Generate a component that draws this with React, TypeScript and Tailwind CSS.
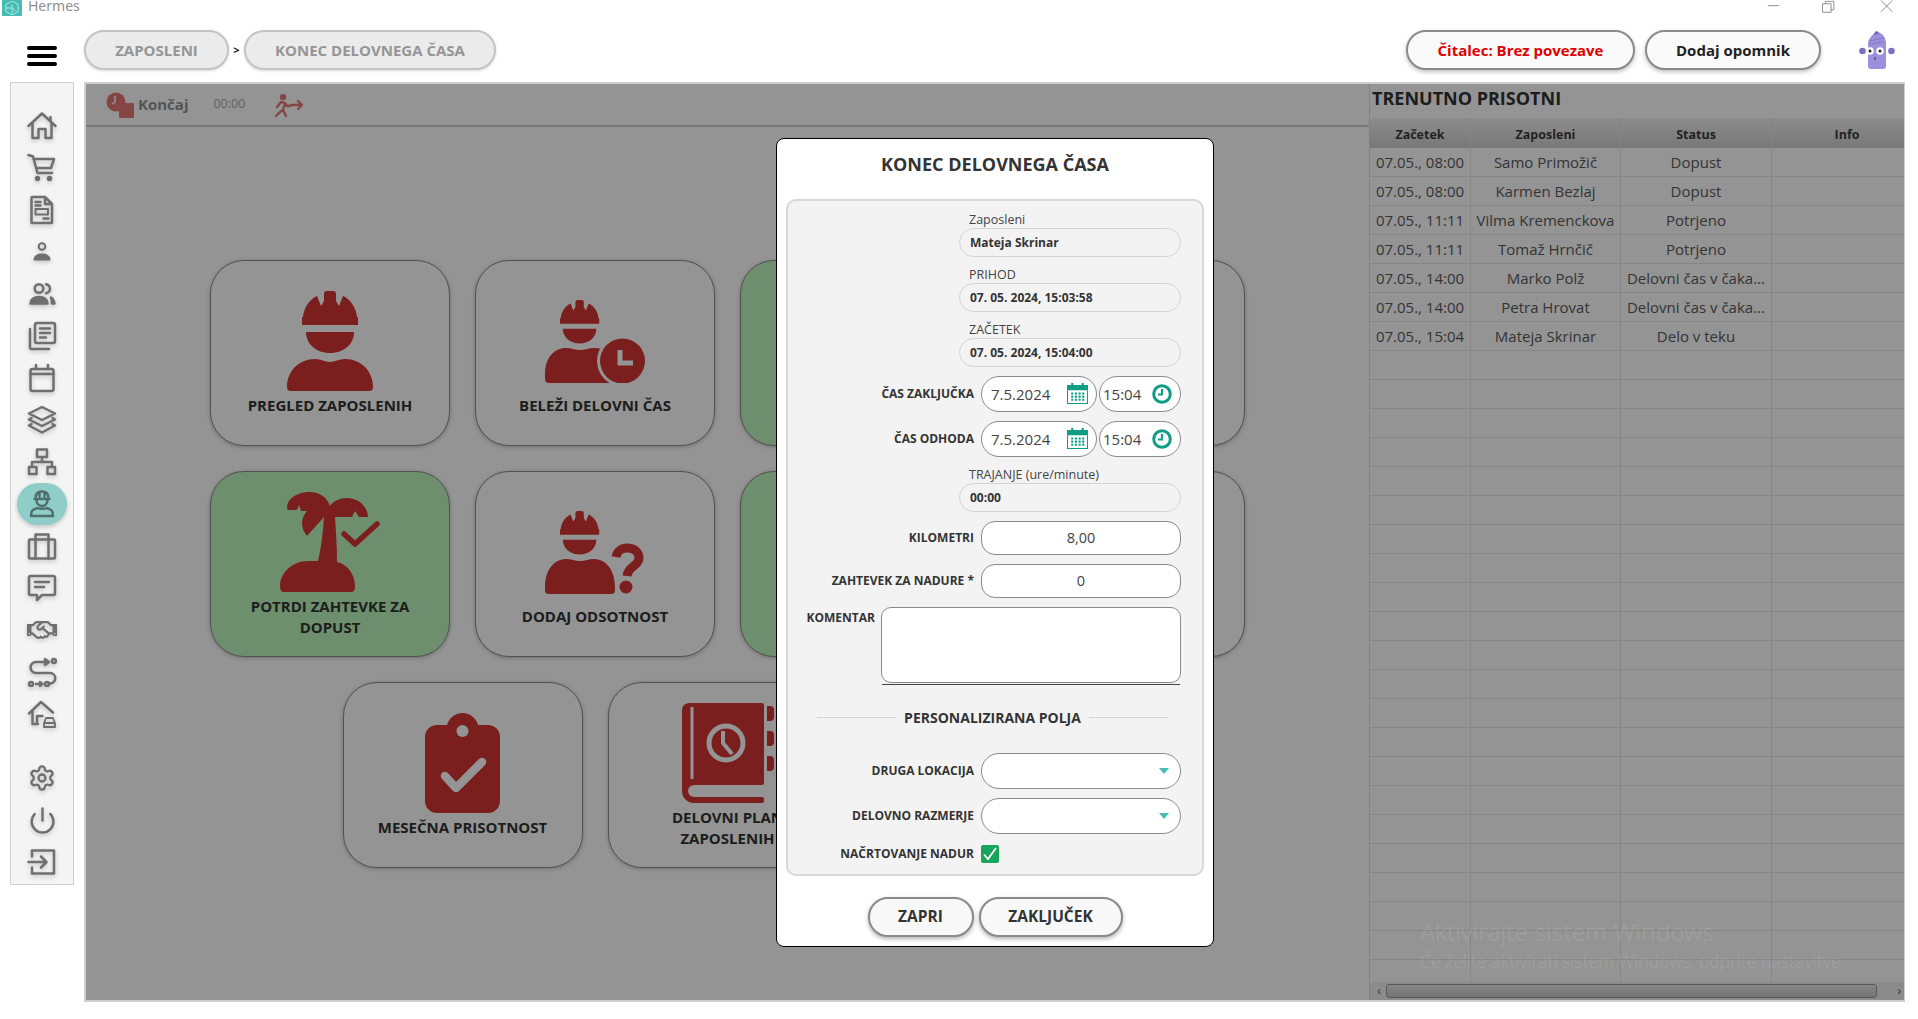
import { Settings, Power } from "lucide-react";
import { FaRegHandshake } from "react-icons/fa";
import type { ReactNode } from "react";

const RED = "#d23535";
const GREY = "#6f6f6f";

function Line({ children }: { children: ReactNode }) {
  return (
    <svg viewBox="0 0 30 30" className="h-[30px] w-[30px]" fill="none" stroke={GREY} strokeWidth="2.5" strokeLinecap="round" strokeLinejoin="round">
      {children}
    </svg>
  );
}

const navTop: ReactNode[] = [
  <Line><path d="M1.500 15 15 2.500 28.500 15M23.500 6v4M5.500 12v15h6V18h7v9h6V12" /></Line>,
  <Line><path d="M1.500 2 6 3.500 10.500 20H25M6.500 6H27l-3 9H9" /><circle cx="10.500" cy="25.500" r="1.500" fill={GREY} /><circle cx="22.500" cy="25.500" r="1.500" fill={GREY} /></Line>,
  <Line><path d="M5 2h13l7 7v18.500a.5.5 0 0 1-.5.5H5a.5.5 0 0 1-.5-.5V2.500A.5.5 0 0 1 5 2ZM18 2v7h7M8.500 7h5M8.500 10.500h5M16.500 23.500h5" /><rect x="8.500" y="14" width="12.500" height="5.500" strokeWidth="2" /></Line>,
  <Line><circle cx="15" cy="9.500" r="3.300" strokeWidth="2" /><path d="M7.500 22.500c.5-3.500 3.500-5 7.500-5s7 1.500 7.500 5Z" fill={GREY} strokeWidth="2" /></Line>,
  <Line><circle cx="12" cy="9.500" r="4.300" /><path d="M3.500 24.500c.5-5 4-6.500 8.500-6.500s8 1.500 8.500 6.500Z" fill={GREY} /><path d="M19 5.300c2.600.7 4 2.300 4 4.500s-1.400 3.800-4 4.500" /><path d="M24 18.500c2 1 3 3.200 3.500 6H25c0-2.500-.5-4.500-1-6Z" fill={GREY} /></Line>,
  <Line><rect x="8" y="2" width="20" height="20" rx="2" /><path d="M3 8v18.500A1.500 1.500 0 0 0 4.500 28H22M13 7.500h10M13 12h10M13 16.500h6" /></Line>,
  <Line><rect x="3.500" y="6" width="23" height="22" rx="2" /><path d="M3.500 11h23M9 2v4M21 2v4" /></Line>,
  <Line><path d="M15 2 28 8.500 15 15 2 8.500ZM4.500 13 2 14.500 15 21l13-6.500L25.500 13M4.500 19 2 20.500 15 27.500l13-7-2.500-1.500" /></Line>,
  <Line><rect x="10" y="2.500" width="10" height="7.500" /><path d="M15 10v5M5 20v-5h20v5" /><rect x="2" y="20" width="7.500" height="7" /><rect x="20.500" y="20" width="7.500" height="7" /></Line>,
  <Line><path d="M8.500 9.500C8.500 5 11 2.500 15 2.500s6.500 2.500 6.500 7M7.500 10h15M12.500 3.500v4M17.500 3.500v4M9.500 11c0 3.500 2.500 6 5.500 6s5.500-2.500 5.500-6M4 27c0-5 1-6.500 6.500-8 2 1 7 1 9 0 5.500 1.500 6.500 3 6.500 8Z" stroke="#4f6f6d" /></Line>,
  <Line><rect x="2" y="8.500" width="26" height="19" rx="1" /><path d="M8.500 8.500V3.500h13v5M8.500 8.500v19M21.500 8.500v19" /></Line>,
  <Line><path d="M3.500 3h23A1.500 1.500 0 0 1 28 4.500v16a1.500 1.500 0 0 1-1.500 1.500H15l-5 5v-5H3.500A1.500 1.500 0 0 1 2 20.500v-16A1.500 1.500 0 0 1 3.500 3ZM8 9h14M8 14h9" /></Line>,
  <FaRegHandshake size={30} color={GREY} />,
  <Line><path d="M21 5H9a5.500 5.500 0 0 0 0 11h14a5 5 0 0 1 0 10.500h-1" /><path d="M18 2l4 3-4 3Z" fill={GREY} /><circle cx="27" cy="4" r="2" /><circle cx="4" cy="27" r="2" /><path d="M9 27h3" /><path d="M13 25l2.500 2-2.500 2Z" fill={GREY} /><circle cx="20" cy="27" r="2" /></Line>,
  <Line><path d="M2 14.500 14 3l12 10.500M5.500 12v13h5.500M10 24v-7h5.500" /><path d="M17 28v-4l2-5h7l2 5v4ZM17 24h11" strokeWidth="1.800" /></Line>,
];

const navBottom: ReactNode[] = [
  <Settings size={28} color={GREY} strokeWidth={2} />,
  <Power size={29} color={GREY} strokeWidth={2} />,
  <Line><path d="M5 9.500V3.500h22v23H5v-6M1.500 15h18M14 9.500l5.500 5.500L14 20.500" /></Line>,
];

function HeadShape() {
  return (
    <>
      <path d="M16 26c1-10 7-18 14-21l4 10 3-5V3q0-3 3-3h6q3 0 3 3v7l3 5 4-10c7 3 13 11 14 21h1v8H15v-8Z" />
      <path d="M19 41h48c0 12-10 21-24 21S19 53 19 41Z" />
    </>
  );
}

function WorkerIcon() {
  return (
    <svg viewBox="0 0 86 100" className="h-[100px] w-[86px]" fill={RED}>
      <HeadShape />
      <path d="M0 96c0-16 12-28 28-28 6 0 10 3 15 3s9-3 15-3c16 0 28 12 28 28q0 4-4 4H4q-4 0-4-4Z" />
    </svg>
  );
}

function WorkerClockIcon() {
  return (
    <svg viewBox="0 0 100 83" className="h-[83px] w-[100px]" fill={RED}>
      <g transform="translate(4.500 0) scale(.7)"><HeadShape /></g>
      <path d="M0 74c0-16 9-26 21-26 5 0 9 2 14 2s9-2 14-2c14 0 23 10 23 26v5q0 4-4 4H4q-4 0-4-4Z" />
      <circle cx="77.500" cy="61" r="25.500" fill="#fff" />
      <circle cx="77.500" cy="61" r="22.500" />
      <path d="M75 50v13h13" fill="none" stroke="#fff" strokeWidth="5" />
    </svg>
  );
}

function WorkerQuestionIcon() {
  return (
    <svg viewBox="0 0 100 83" className="h-[83px] w-[100px]" fill={RED}>
      <g transform="translate(4.500 0) scale(.7)"><HeadShape /></g>
      <path d="M0 76c0-17 9-28 21-28 5 0 9 2 14 2s9-2 14-2c12 0 21 11 21 28v3q0 4-4 4H4q-4 0-4-4Z" />
      <path d="M71 46c1-6 6-9 11-9 7 0 12 4 12 10 0 8-11 8-12 18" fill="none" stroke={RED} strokeWidth="9" />
      <circle cx="81" cy="76" r="6.500" />
    </svg>
  );
}

function PalmIcon() {
  return (
    <svg viewBox="0 0 100 100" className="h-[100px] w-[100px]" fill={RED}>
      <path d="M7 16C7 6 18 0 30 0c9 0 17 5 20 14 3-5 10-8 17-8 11 0 20 8 21 18q0 1-1 1H79l-4-6-3 6H55c1 15 2 30 2 45 10 2 18 12 18 24q0 6-4 6H4q-4 0-4-6c0-13 12-25 28-25h10c3-13 5-28 6-44L27 44q-5-6-5-13 0-6 5-12H21l-2-6-2 5H9q-2 0-2-2Z" />
      <path d="M64 42l11 10 22-20" fill="none" stroke={RED} strokeWidth="5.500" strokeLinecap="round" strokeLinejoin="round" />
    </svg>
  );
}

function ClipboardIcon() {
  return (
    <svg viewBox="0 0 75 100" className="h-[100px] w-[75px]" fill={RED}>
      <rect y="12" width="75" height="88" rx="12" />
      <circle cx="37.500" cy="16" r="16" />
      <circle cx="37.500" cy="18" r="6" fill="#fff" />
      <path d="M20 63l11 12 26-26" fill="none" stroke="#fff" strokeWidth="8.500" strokeLinecap="round" strokeLinejoin="round" />
    </svg>
  );
}

function BookIcon() {
  return (
    <svg viewBox="0 0 92 100" className="h-[100px] w-[92px]" fill={RED}>
      <path d="M8 0h72q2 0 2 2v78q0 2-2 2H12C5 82 0 87 0 90V8q0-8 8-8Z" />
      <path d="M0 88a12 12 0 0 0 12 12h68q2 0 2-2v-2q0-2-2-2H12a6 6 0 0 1 0-12H8C3 84 0 86 0 88Z" />
      <path d="M10 4v72" stroke="#fff" strokeWidth="3" />
      <circle cx="44" cy="40" r="17" fill="none" stroke="#fff" strokeWidth="5" />
      <path d="M41 28v12l9 11" fill="none" stroke="#fff" strokeWidth="4" />
      <path d="M85 3h3q4 0 4 4v7q0 4-4 4h-3ZM85 28h3q4 0 4 4v7q0 4-4 4h-3ZM85 53h3q4 0 4 4v7q0 4-4 4h-3Z" />
    </svg>
  );
}

function Card({ icon, label, green }: { icon?: ReactNode; label?: string; green?: boolean }) {
  return (
    <div className={`flex h-[186px] w-[240px] flex-col items-center justify-center gap-[4px] rounded-[34px] border-[1.5px] border-[#8c8c8c] px-4 pt-[2px] shadow-[0_1px_4px_rgba(0,0,0,0.25)] ${green ? "bg-[#bef6be]" : "bg-white"}`}>
      {icon && <div className="flex h-[100px] items-center justify-center">{icon}</div>}
      {label && <div className="text-center text-[15px] leading-[21px] font-bold text-[#333]">{label}</div>}
    </div>
  );
}

const rows = [
  ["07.05., 08:00", "Samo Primožič", "Dopust"],
  ["07.05., 08:00", "Karmen Bezlaj", "Dopust"],
  ["07.05., 11:11", "Vilma Kremenckova", "Potrjeno"],
  ["07.05., 11:11", "Tomaž Hrnčič", "Potrjeno"],
  ["07.05., 14:00", "Marko Polž", "Delovni čas v čaka..."],
  ["07.05., 14:00", "Petra Hrovat", "Delovni čas v čaka..."],
  ["07.05., 15:04", "Mateja Skrinar", "Delo v teku"],
];

function TableRow({ cells }: { cells: string[] }) {
  return (
    <div className="flex h-[29px] shrink-0 border-b border-[#e7e7e7] text-[15px] leading-[28px] text-[#5a5a5a]">
      <div className="w-[101px] shrink-0 border-r border-[#e7e7e7] text-center">{cells[0]}</div>
      <div className="w-[150px] shrink-0 border-r border-[#e7e7e7] text-center whitespace-nowrap">{cells[1]}</div>
      <div className="w-[151px] shrink-0 border-r border-[#e7e7e7] text-center whitespace-nowrap">{cells[2]}</div>
      <div className="flex-1" />
    </div>
  );
}

function ReadOnly({ label, value }: { label: string; value: string }) {
  return (
    <div className="w-[222px]">
      <div className="h-[17px] pl-[10px] text-[12.5px] leading-[17px] text-[#444]">{label}</div>
      <div className="h-[29px] rounded-full border border-[#d4d4d4] pl-[10px] text-[12px] leading-[27px] font-bold text-[#333]">{value}</div>
    </div>
  );
}

function Row({ label, children }: { label: string; children: ReactNode }) {
  return (
    <div className="flex items-center justify-end gap-[7px]">
      <div className="text-[12px] font-bold whitespace-nowrap text-[#333]">{label}</div>
      {children}
    </div>
  );
}

function CalendarGlyph() {
  return (
    <svg viewBox="0 0 20 20" className="h-[21px] w-[21px]" fill="#0f9d85">
      <path d="M0 2h4V0h2v2h8V0h2v2h4v5H0Z" />
      <path d="M0 7h1v12h18V7h1v13H0Z" />
      <path d="M4 9h2v2H4ZM7.500 9h2v2h-2ZM11 9h2v2h-2ZM14.500 9h2v2h-2ZM4 12h2v2H4ZM7.500 12h2v2h-2ZM11 12h2v2h-2ZM14.500 12h2v2h-2ZM4 15h2v2H4ZM7.500 15h2v2h-2ZM11 15h2v2h-2ZM14.500 15h2v2h-2Z" />
    </svg>
  );
}

function ClockGlyph() {
  return (
    <svg viewBox="0 0 20 20" className="h-[20px] w-[20px]" fill="none" stroke="#0f9d85">
      <circle cx="10" cy="10" r="8.300" strokeWidth="3" />
      <path d="M10 5v5.500H6" strokeWidth="2" />
    </svg>
  );
}

function DateTime() {
  return (
    <div className="flex gap-[2px]">
      <div className="flex h-[36px] w-[116px] items-center justify-between rounded-full border border-[#8a8a8a] bg-white pr-[8px] pl-[9px] text-[15px] leading-[36px] text-[#444]">
        <span className="pt-[1px]">7.5.2024</span>
        <CalendarGlyph />
      </div>
      <div className="flex h-[36px] w-[82px] items-center justify-between rounded-full border border-[#8a8a8a] bg-white pr-[8px] pl-[3px] text-[15px] leading-[36px] text-[#444]">
        <span className="pt-[1px]">15:04</span>
        <ClockGlyph />
      </div>
    </div>
  );
}

function NumberField({ value }: { value: string }) {
  return (
    <div className="h-[34px] w-[200px] rounded-[14px] border border-[#8a8a8a] bg-white text-center text-[14.5px] leading-[32px] text-[#444]">{value}</div>
  );
}

function SelectField() {
  return (
    <div className="flex h-[36px] w-[200px] items-center justify-end rounded-full border border-[#8a8a8a] bg-white pr-[11px]">
      <div className="h-0 w-0 border-x-[5px] border-t-[6px] border-x-transparent border-t-[#45bdb5]" />
    </div>
  );
}

function Mascot() {
  return (
    <svg viewBox="0 0 38 40" className="h-[40px] w-[38px]">
      <path d="M9 14c0-4 3-8 6-10l3-3 3 2c4 2 6 6 6 11v22q0 3-3 3H12q-3 0-3-3Z" fill="#9c90dc" />
      <path d="M14 5l3-4 3 2.500" fill="#6e60b5" />
      <path d="M10 11l15-3M11 14l13-2" stroke="#7d70c4" strokeWidth=".8" />
      <circle cx="3.500" cy="21" r="3.300" fill="#7d70c4" />
      <circle cx="32.500" cy="21" r="3.300" fill="#7d70c4" />
      <circle cx="11" cy="21" r="3.800" fill="#fff" />
      <circle cx="21" cy="21" r="3.800" fill="#fff" />
      <circle cx="11" cy="21" r="1.500" fill="#222" />
      <circle cx="21" cy="21" r="1.500" fill="#222" />
      <path d="M16 27v3" stroke="#333" strokeWidth="1" />
    </svg>
  );
}

export default function App() {
  return (
    <div className="relative flex h-screen w-screen flex-col overflow-hidden bg-white font-['Open_Sans',sans-serif]">
      {/* title bar, cut off at the top like in the capture */}
      <div className="relative flex h-[16px] shrink-0 items-start overflow-hidden pl-[2px]">
        <div className="flex h-[16px] w-[20px] items-center justify-center bg-[#45bdb5]">
          <svg viewBox="0 0 16 16" className="h-[14px] w-[14px]" fill="none" stroke="#bfeae6" strokeWidth="1">
            <path d="M8 0 15 4v8l-7 4-7-4V4ZM8 4v12M1 8h7l4 3" />
          </svg>
        </div>
        <div className="-mt-[4px] ml-[6px] font-['Noto_Sans',sans-serif] text-[14px] leading-[20px] text-[#8f8f8f]">Hermes</div>
        <svg viewBox="0 0 140 16" className="absolute top-0 right-[20px] h-[16px] w-[132px]" fill="none" stroke="#8a8a8a">
          <path d="M2 5.500h12M60 3.500h9v9h-9ZM63 3.500V1h9v9h-3M122 0l12 12M134 0l-12 12" />
        </svg>
      </div>

      {/* top bar */}
      <div className="flex h-[66px] shrink-0 items-start pt-[14px]">
        <div className="flex w-[84px] shrink-0 justify-center pt-[16px]">
          <div className="flex w-[30px] flex-col gap-[4px]">
            <div className="h-[4px] rounded-full bg-black" />
            <div className="h-[4px] rounded-full bg-black" />
            <div className="h-[4px] rounded-full bg-black" />
          </div>
        </div>
        <div className="flex items-center">
          <div className="flex h-[40px] w-[145px] items-center justify-center rounded-full border-2 border-[#c4c4c4] bg-[#ebebeb] text-[15px] font-bold text-[#959595] shadow-[0_1px_3px_rgba(0,0,0,0.15)]">ZAPOSLENI</div>
          <div className="w-[15px] text-center text-[11px] font-bold text-[#111]">&gt;</div>
          <div className="flex h-[40px] w-[252px] items-center justify-center rounded-full border-2 border-[#c4c4c4] bg-[#ebebeb] text-[15px] font-bold text-[#959595] shadow-[0_1px_3px_rgba(0,0,0,0.15)]">KONEC DELOVNEGA ČASA</div>
        </div>
        <div className="flex-1" />
        <div className="flex h-[40px] w-[229px] items-center justify-center rounded-full border-2 border-[#8a8a8a] bg-[#fafafa] text-[15px] font-bold text-[#e00000] shadow-[0_2px_4px_rgba(0,0,0,0.25)]">Čitalec: Brez povezave</div>
        <div className="ml-[10px] flex h-[40px] w-[176px] items-center justify-center rounded-full border-2 border-[#8a8a8a] bg-[#fafafa] text-[15px] font-bold text-[#222] shadow-[0_2px_4px_rgba(0,0,0,0.25)]">Dodaj opomnik</div>
        <div className="mr-[21px] ml-[38px]"><Mascot /></div>
      </div>

      {/* body */}
      <div className="flex min-h-0 flex-1">
        <div className="w-[84px] shrink-0 pl-[10px]">
          <div className="flex h-[803px] w-[64px] flex-col items-center border border-[#cfcfcf] bg-[#f4f4f4] pt-[22px]">
            {navTop.map((icon, i) => (
              <div key={i} className={`flex h-[42px] w-[50px] shrink-0 items-center justify-center drop-shadow-[0_2px_2px_rgba(0,0,0,0.2)] ${i === 9 ? "rounded-full bg-[#8fcdc9]" : ""}`}>
                {icon}
              </div>
            ))}
            <div className="h-[22px] shrink-0" />
            {navBottom.map((icon, i) => (
              <div key={i} className="flex h-[42px] w-[50px] shrink-0 items-center justify-center drop-shadow-[0_2px_2px_rgba(0,0,0,0.2)]">
                {icon}
              </div>
            ))}
          </div>
        </div>

        <div className="relative mr-[13px] mb-[17px] flex min-w-0 flex-1 overflow-hidden border-y-2 border-r border-l-2 border-[#cfcfcf] bg-white">
          {/* left working area */}
          <div className="flex w-[1283px] shrink-0 flex-col">
            <div className="flex h-[43px] shrink-0 items-center border-b-2 border-[#cfcfcf] pl-[20px]">
              <svg viewBox="0 0 28 26" className="h-[26px] w-[28px]">
                <circle cx="10" cy="10" r="9.500" fill="#e77878" />
                <path d="M9 4v6l-3 2" stroke="#fff" strokeWidth="1.500" fill="none" />
                <rect x="13" y="11" width="15" height="15" rx="1" fill="#e77878" />
              </svg>
              <div className="ml-[4px] text-[15px] font-bold text-[#929292]">Končaj</div>
              <div className="ml-[25px] text-[12.500px] text-[#aaa]">00:00</div>
              <svg viewBox="0 0 30 24" className="mt-[2px] ml-[28px] h-[24px] w-[30px]" fill="none" stroke="#e77878" strokeWidth="2.400" strokeLinecap="round" strokeLinejoin="round">
                <circle cx="10" cy="3" r="2" fill="#e77878" />
                <path d="M4 13l4-5 4 1-2 7 3 6M10 16l-3 2-4 4M12 9l2 3h3M18 11h11M25 7l4 4-4 4" />
              </svg>
            </div>
            <div className="flex min-h-0 flex-1 flex-wrap content-center justify-center gap-[25px]">
              <Card icon={<WorkerIcon />} label="PREGLED ZAPOSLENIH" />
              <Card icon={<WorkerClockIcon />} label="BELEŽI DELOVNI ČAS" />
              <Card green />
              <Card />
              <Card icon={<PalmIcon />} label="POTRDI ZAHTEVKE ZA DOPUST" green />
              <Card icon={<WorkerQuestionIcon />} label="DODAJ ODSOTNOST" />
              <Card green />
              <Card />
              <Card icon={<ClipboardIcon />} label="MESEČNA PRISOTNOST" />
              <Card icon={<BookIcon />} label="DELOVNI PLAN ZAPOSLENIH" />
              <Card />
            </div>
          </div>

          {/* present employees */}
          <div className="flex min-w-0 flex-1 flex-col border-l border-[#dfdfdf]">
            <div className="h-[34px] shrink-0 pl-[2px] text-[18px] leading-[28px] font-bold text-[#333]">TRENUTNO PRISOTNI</div>
            <div className="flex h-[30px] shrink-0 overflow-hidden bg-gradient-to-b from-[#f2f2f2] to-[#cfcfcf] text-[12.500px] leading-[33px] font-bold text-[#3c3c3c]">
              <div className="w-[101px] shrink-0 border-r border-[#e4e4e4] text-center">Začetek</div>
              <div className="w-[150px] shrink-0 border-r border-[#e4e4e4] text-center">Zaposleni</div>
              <div className="w-[151px] shrink-0 border-r border-[#e4e4e4] text-center">Status</div>
              <div className="w-[150px] shrink-0 text-center">Info</div>
            </div>
            <div className="flex min-h-0 flex-1 flex-col overflow-hidden">
              {rows.map((r) => (
                <TableRow key={r[1]} cells={r} />
              ))}
              {Array.from({ length: 23 }).map((_, i) => (
                <TableRow key={i} cells={["", "", ""]} />
              ))}
            </div>
            <div className="flex h-[18px] shrink-0 items-center bg-[#f0f0f0] px-[2px]">
              <div className="w-[14px] text-center text-[12px] leading-[14px] text-[#555]">‹</div>
              <div className="h-[14px] w-[491px] rounded-[3px] border border-[#9a9a9a] bg-gradient-to-b from-[#e8e8e8] to-[#c8c8c8]" />
              <div className="flex-1 pr-[1px] text-right text-[12px] leading-[14px] text-[#555]">›</div>
            </div>
          </div>

          {/* dimmed mask with the modal */}
          <div className="absolute inset-0 flex items-center justify-center bg-black/[0.42]">
            <div className="flex h-[809px] w-[438px] flex-col rounded-[8px] border border-black bg-white px-[9px]">
              <div className="h-[60px] shrink-0 pt-[12px] text-center text-[18px] leading-[26px] font-bold text-[#333]">KONEC DELOVNEGA ČASA</div>
              <div className="flex flex-col items-end gap-[9px] rounded-[10px] border-2 border-[#d8d8d8] bg-[#f3f3f3] pt-[10px] pr-[21px] pb-[11px]">
                <ReadOnly label="Zaposleni" value="Mateja Skrinar" />
                <ReadOnly label="PRIHOD" value="07. 05. 2024, 15:03:58" />
                <ReadOnly label="ZAČETEK" value="07. 05. 2024, 15:04:00" />
                <Row label="ČAS ZAKLJUČKA"><DateTime /></Row>
                <Row label="ČAS ODHODA"><DateTime /></Row>
                <ReadOnly label="TRAJANJE (ure/minute)" value="00:00" />
                <Row label="KILOMETRI"><NumberField value="8,00" /></Row>
                <Row label="ZAHTEVEK ZA NADURE *"><NumberField value="0" /></Row>
                <div className="flex items-start justify-end gap-[6px]">
                  <div className="pt-[2px] text-[12px] font-bold text-[#333]">KOMENTAR</div>
                  <div className="w-[300px]">
                    <div className="h-[76px] rounded-[10px] border border-[#8a8a8a] bg-white" />
                    <div className="mx-[1px] mt-[1px] h-px bg-[#444]" />
                  </div>
                </div>
                <div className="mt-[14px] mr-[13px] mb-[16px] flex h-[20px] w-[351px] items-center gap-[8px]">
                  <div className="h-px flex-1 bg-[#d4d4d4]" />
                  <div className="text-[14px] font-bold whitespace-nowrap text-[#333]">PERSONALIZIRANA POLJA</div>
                  <div className="h-px flex-1 bg-[#d4d4d4]" />
                </div>
                <Row label="DRUGA LOKACIJA"><SelectField /></Row>
                <Row label="DELOVNO RAZMERJE"><SelectField /></Row>
                <div className="mt-[2px]">
                  <Row label="NAČRTOVANJE NADUR">
                    <div className="w-[200px]">
                      <div className="flex h-[18px] w-[18px] items-center justify-center rounded-[2px] bg-[#16a55a]">
                        <svg viewBox="0 0 18 18" className="h-[18px] w-[18px]" fill="none" stroke="#fff" strokeWidth="1.800">
                          <path d="M3 9.500 7 14l8-11" />
                        </svg>
                      </div>
                    </div>
                  </Row>
                </div>
              </div>
              <div className="flex justify-center gap-[5px] pt-[21px]">
                <div className="flex h-[40px] w-[106px] items-center justify-center rounded-full border-2 border-[#8a8a8a] bg-[#f8f8f8] pt-[1px] text-[15.5px] font-bold text-[#333] shadow-[0_2px_4px_rgba(0,0,0,0.3)]">ZAPRI</div>
                <div className="flex h-[40px] w-[144px] items-center justify-center rounded-full border-2 border-[#8a8a8a] bg-[#f8f8f8] pt-[1px] text-[15.5px] font-bold text-[#333] shadow-[0_2px_4px_rgba(0,0,0,0.3)]">ZAKLJUČEK</div>
              </div>
            </div>
          </div>

          {/* Windows watermark */}
          <div className="pointer-events-none absolute top-[831px] left-[1334px] font-['Noto_Sans',sans-serif] font-light whitespace-nowrap text-white/[0.1]">
            <div className="text-[24.500px] leading-[34px]">Aktivirajte sistem Windows</div>
            <div className="text-[17.500px] leading-[24px]">Če želite aktivirati sistem Windows, odprite nastavitve.</div>
          </div>
        </div>
      </div>
    </div>
  );
}
